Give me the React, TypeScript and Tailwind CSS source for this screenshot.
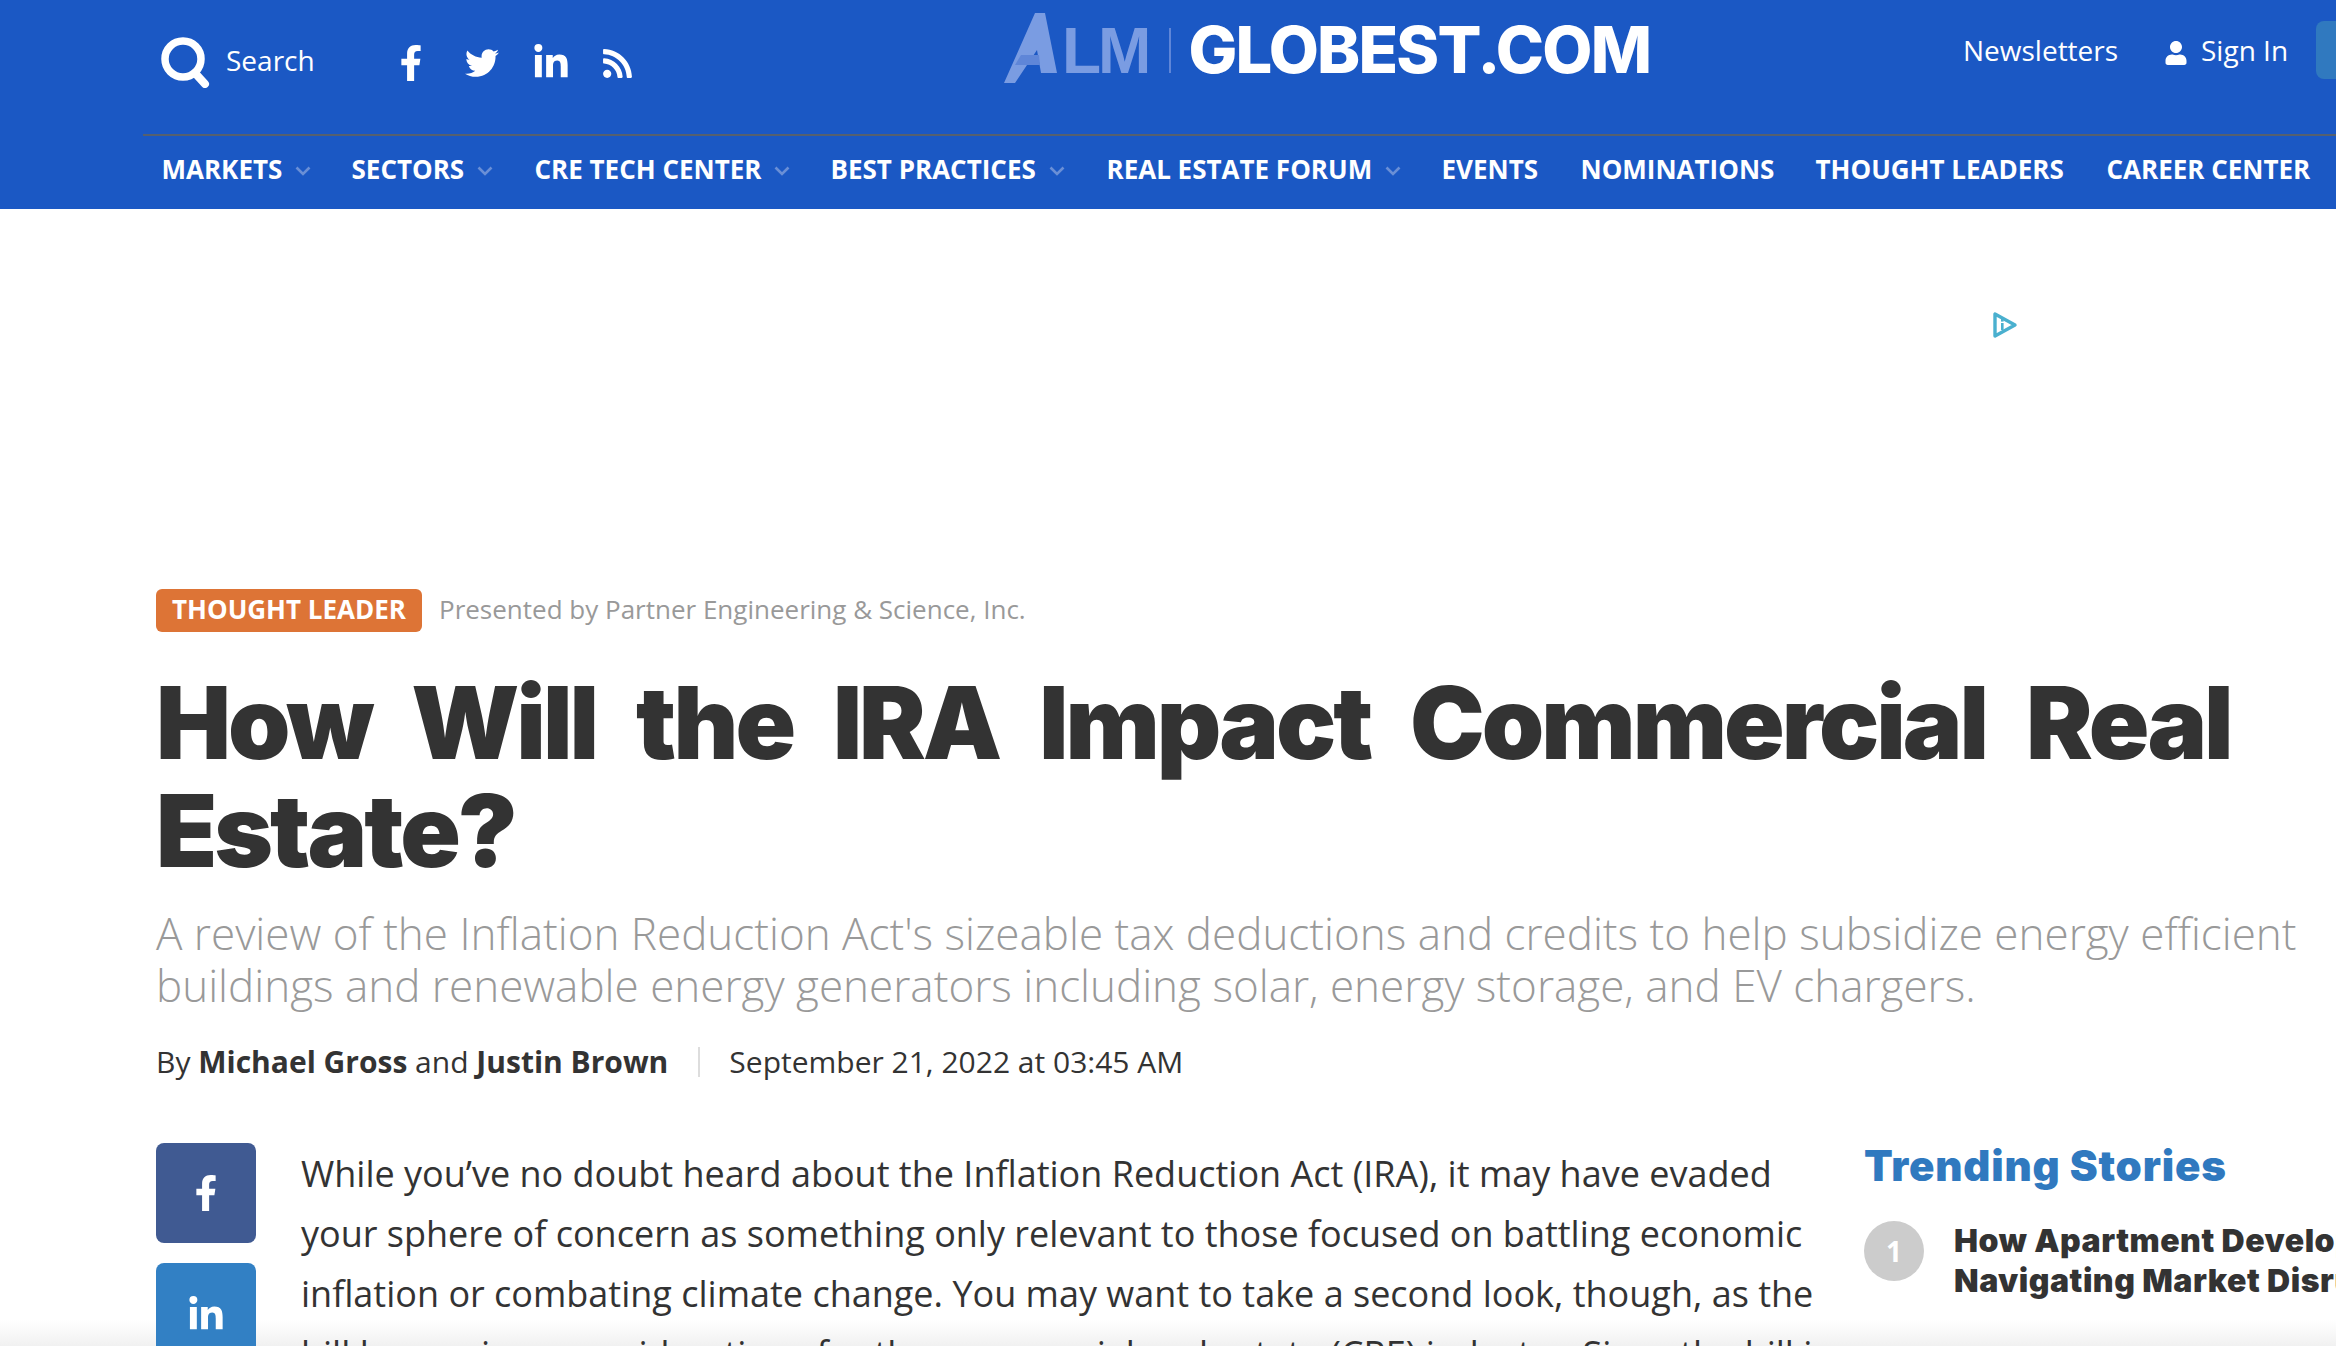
import React from "react";
import { FaFacebookF, FaTwitter, FaLinkedinIn, FaRss, FaUser } from "react-icons/fa";

const items: [string, boolean, string][] = [
  ["MARKETS", true, "w-[190px]"],
  ["SECTORS", true, "w-[183px]"],
  ["CRE TECH CENTER", true, "w-[296px]"],
  ["BEST PRACTICES", true, "w-[276px]"],
  ["REAL ESTATE FORUM", true, "w-[335px]"],
  ["EVENTS", false, "w-[139px]"],
  ["NOMINATIONS", false, "w-[235px]"],
  ["THOUGHT LEADERS", false, "w-[291px]"],
  ["CAREER CENTER", false, "w-[210px]"],
];

function Chevron() {
  return (
    <svg width="16" height="10" viewBox="0 0 16 10" className="ml-[13px] mt-[2px] shrink-0">
      <path d="M1.5 1.5 L8 8 L14.5 1.5" fill="none" stroke="#6a8fd6" strokeWidth="2.6" />
    </svg>
  );
}

export default function App() {
  return (
    <div className="relative w-[2336px] h-[1346px] overflow-hidden bg-white font-['Open_Sans',sans-serif] text-[#333333]">
      <div className="absolute left-0 right-0 bottom-0 h-[26px] bg-gradient-to-b from-white to-[#f1f1f1]" />
      <header className="relative h-[209px] bg-[#1b58c4] text-white pl-[143px]">
        <div className="relative h-[134px] flex items-start">
          <div className="flex items-center pl-[17px] pt-[36px]">
            <svg width="50" height="52" viewBox="0 0 50 52" fill="none">
              <circle cx="23" cy="23" r="18" stroke="white" strokeWidth="7.5" />
              <path d="M35 37 L45 48" stroke="white" strokeWidth="8" strokeLinecap="round" />
            </svg>
            <span className="ml-[16px] text-[28px] leading-none mt-[-4px]">Search</span>
          </div>
          <div className="flex items-center pt-[44px]">
            <FaFacebookF className="ml-[79px] w-[34px] h-[36px]" />
            <FaTwitter className="ml-[36px] w-[36px] h-[34px]" />
            <FaLinkedinIn className="ml-[32px] w-[38px] h-[38px]" />
            <FaRss className="ml-[31px] w-[33px] h-[33px]" />
          </div>
          <div className="absolute left-[861px] top-[13px] flex items-start h-[70px]">
            <svg width="54" height="70" viewBox="0 0 54 70" className="shrink-0">
              <path d="M31 0 L41 0 L53 60 L37 60 L33 37 L11 70 L0 70 Z" fill="#7a9ce2" />
              <path d="M17 42 L35 42 L36 52 L11 52 Z" fill="#5f86d8" />
            </svg>
            <span className="ml-[4px] mt-[8px] text-[64px] leading-[60px] font-['Liberation_Sans',sans-serif] font-bold text-[#7a9ce2] tracking-[-3px]">LM</span>
            <span className="ml-[21px] mt-[15px] w-[2px] h-[45px] bg-[#5f86d8]" />
            <span className="ml-[17px] mt-[6px] text-[65px] leading-[62px] font-['Inter',sans-serif] font-extrabold tracking-[-1.8px] text-white">GLOBEST.COM</span>
          </div>
          <div className="absolute left-[1820px] top-[32px] text-[28px] leading-[36px]">Newsletters</div>
          <div className="absolute left-[2022px] top-[41px] w-[24px] h-[24px]"><FaUser className="w-[22px] h-[24px]" /></div>
          <div className="absolute left-[2058px] top-[32px] text-[28px] leading-[36px]">Sign In</div>
          <div className="absolute left-[2173px] top-[21px] w-[60px] h-[58px] rounded-lg bg-[#3079bf]" />
        </div>
        <div className="h-[2px] bg-[#55606f]" />
        <nav className="flex items-center h-[73px] pl-[18.5px] pb-[6px]">
          {items.map(([t, c, w]) => (
            <div key={t} className={`flex items-center shrink-0 text-[26px] font-bold whitespace-nowrap ${w}`}>
              {t}
              {c && <Chevron />}
            </div>
          ))}
        </nav>
      </header>

      <div className="h-[380px] relative">
        <svg width="26" height="28" viewBox="0 0 26 28" className="absolute left-[1992px] top-[102px]">
          <path d="M3 3 L3 25 L23 14 Z" fill="none" stroke="#4ab0cf" strokeWidth="3.4" strokeLinejoin="round" />
          <rect x="9" y="12" width="2.6" height="7" fill="#4ab0cf" />
          <rect x="9" y="8" width="2.6" height="2.6" fill="#4ab0cf" />
        </svg>
      </div>

      <main className="relative pl-[156px]">
        <div className="flex items-center">
          <span className="h-[43px] w-[266px] rounded-[6px] bg-[#dd7436] text-white text-[26px] font-bold flex items-center justify-center whitespace-nowrap pb-[3px]">THOUGHT LEADER</span>
          <span className="ml-[17px] text-[26px] text-[#999999] whitespace-nowrap pb-[3px]">Presented by Partner Engineering &amp; Science, Inc.</span>
        </div>
        <h1 className="mt-[37px] text-[100px] leading-[108px] font-['Inter',sans-serif] font-black tracking-[-3px] [word-spacing:23px] w-[2150px] text-[#333333]">How Will the IRA Impact Commercial Real Estate?</h1>
        <p className="mt-[22px] text-[44px] leading-[52px] font-light text-[#999999] w-[2170px]">A review of the Inflation Reduction Act's sizeable tax deductions and credits to help subsidize energy efficient buildings and renewable energy generators including solar, energy storage, and EV chargers.</p>
        <div className="mt-[30px] flex items-center text-[30px] leading-[42px] whitespace-nowrap">
          <span>By <b>Michael Gross</b> and <b>Justin Brown</b></span>
          <span className="ml-[30px] w-[2px] h-[30px] bg-[#dddddd]" />
          <span className="ml-[29px]">September 21, 2022 at 03:45 AM</span>
        </div>
        <div className="mt-[60px] flex">
          <div className="w-[100px] shrink-0 flex flex-col gap-[20px]">
            <div className="h-[100px] rounded-lg bg-[#405a92] text-white flex items-center justify-center"><FaFacebookF className="w-[36px] h-[36px]" /></div>
            <div className="h-[100px] rounded-lg bg-[#3280c4] text-white flex items-center justify-center pt-[4px]"><FaLinkedinIn className="w-[38px] h-[38px]" /></div>
          </div>
          <div className="ml-[45px] mt-[1px] w-[1530px] shrink-0 text-[36px] leading-[60px]">
            <p>While you’ve no doubt heard about the Inflation Reduction Act (IRA), it may have evaded your sphere of concern as something only relevant to those focused on battling economic inflation or combating climate change. You may want to take a second look, though, as the bill has various considerations for the commercial real estate (CRE) industry. Since the bill is</p>
          </div>
          <aside className="ml-[33px] w-[600px] shrink-0">
            <h2 className="text-[42px] leading-[50px] font-['Inter',sans-serif] font-black tracking-[0.8px] text-[#3079bf] mt-[-2px]">Trending Stories</h2>
            <div className="mt-[30px] flex">
              <span className="w-[60px] h-[60px] rounded-full bg-[#cccccc] text-white text-[28px] font-bold flex items-center justify-center shrink-0">1</span>
              <div className="ml-[30px] text-[32px] leading-[40px] font-['Inter',sans-serif] font-black tracking-[0.5px] whitespace-nowrap">
                <div>How Apartment Developers Are</div>
                <div>Navigating Market Disruption</div>
              </div>
            </div>
            <div className="mt-[60px] w-[60px] h-[60px] rounded-full bg-[#cccccc]" />
          </aside>
        </div>
      </main>
    </div>
  );
}
